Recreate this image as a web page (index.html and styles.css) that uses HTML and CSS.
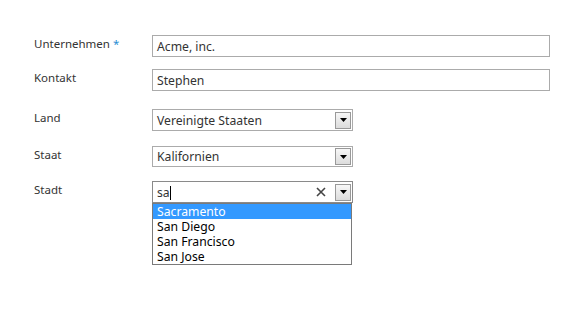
FILE: index.html
```
<!DOCTYPE html>
<html>
  <head>
    <meta charset="utf-8">
    <link rel="stylesheet" href="styles.css">
  </head>
  <body>
    <div class="form">
      <div class="row r-company">
        <label class="lbl">Unternehmen <span class="req">*</span></label>
        <div class="field text wide">Acme, inc.</div>
      </div>
      <div class="row r-contact">
        <label class="lbl">Kontakt</label>
        <div class="field text wide">Stephen</div>
      </div>
      <div class="row r-country">
        <label class="lbl">Land</label>
        <div class="field select">
          <span class="val">Vereinigte Staaten</span>
          <span class="dd-btn"><svg width="7" height="4" viewBox="0 0 7 4"><path d="M0 0h7L3.5 4z" fill="#000"/></svg></span>
        </div>
      </div>
      <div class="row r-state">
        <label class="lbl">Staat</label>
        <div class="field select">
          <span class="val">Kalifornien</span>
          <span class="dd-btn"><svg width="7" height="4" viewBox="0 0 7 4"><path d="M0 0h7L3.5 4z" fill="#000"/></svg></span>
        </div>
      </div>
      <div class="row r-city">
        <label class="lbl">Stadt</label>
        <div class="combo">
          <div class="field select active">
            <span class="val">sa<span class="caret"></span></span>
            <span class="clear"><svg width="10" height="10" viewBox="0 0 10 10"><path d="M1 1L9 9M9 1L1 9" stroke="#444" stroke-width="1.6"/></svg></span>
            <span class="dd-btn"><svg width="7" height="4" viewBox="0 0 7 4"><path d="M0 0h7L3.5 4z" fill="#000"/></svg></span>
          </div>
          <ul class="list">
            <li class="on">Sacramento</li>
            <li>San Diego</li>
            <li>San Francisco</li>
            <li>San Jose</li>
          </ul>
        </div>
      </div>
    </div>
  </body>
</html>
```
FILE: styles.css
```
html, body {
  background: #fff;
}

body {
  margin: 0;
  min-height: 330px;
  font-family: "Noto Sans", "Open Sans", sans-serif;
  font-size: 11.5px;
  color: #262626;
}

.form {
  padding: 35px 0 0 34px;
}

.row {
  display: flex;
  align-items: flex-start;
}

.r-contact { margin-top: 12px; }
.r-country { margin-top: 18px; }
.r-state { margin-top: 15px; }
.r-city { margin-top: 14px; }

.lbl {
  width: 118px;
  flex: none;
  line-height: 17px;
  color: #333;
}

.req {
  color: #2a8dd4;
}

.field {
  box-sizing: border-box;
  height: 22px;
  border: 1px solid #ababab;
  background: #fff;
  display: flex;
  align-items: center;
  padding-left: 4px;
  color: #333;
  font-size: 12.2px;
}

.wide {
  width: 398px;
}

.select {
  width: 201px;
  padding-right: 1px;
}

.r-state .select {
  height: 21px;
}

.val {
  flex: 1;
  white-space: nowrap;
}

.dd-btn {
  box-sizing: border-box;
  width: 16px;
  height: 17px;
  border: 1px solid #999;
  background: linear-gradient(#f7f7f7, #dcdcdc);
  display: flex;
  align-items: center;
  justify-content: center;
}

.combo {
  display: flex;
  flex-direction: column;
}

.active {
  border-color: #8a8a8a;
}

.caret {
  display: inline-block;
  width: 1px;
  height: 14px;
  background: #000;
  vertical-align: -3px;
}

.clear {
  display: flex;
  margin-right: 9px;
}

.list {
  width: 200px;
  box-sizing: border-box;
  margin: 0;
  padding: 0;
  list-style: none;
  border: 1px solid #7a7a7a;
  background: #fff;
}

.list li {
  height: 15px;
  line-height: 15px;
  padding-left: 4px;
  font-size: 12.2px;
  color: #000;
}

.list li.on {
  background: #3399ff;
  color: #fff;
}
```
